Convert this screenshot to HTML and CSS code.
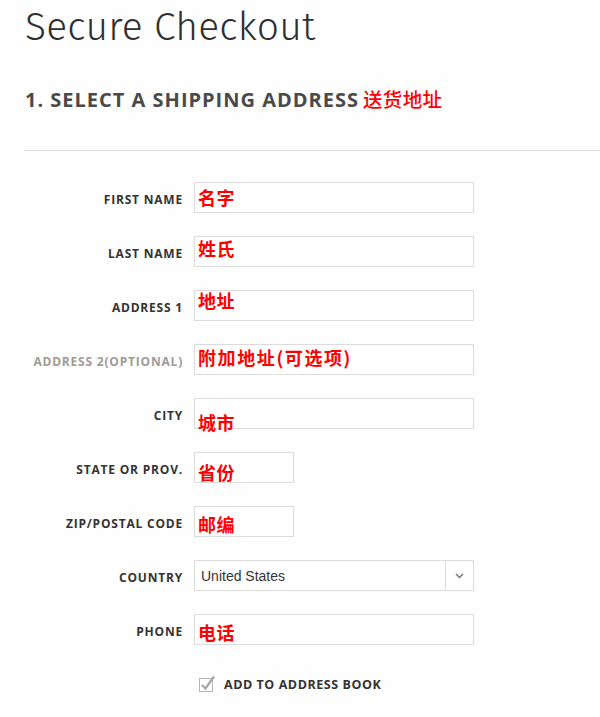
FILE: index.html
```html
<!DOCTYPE html>
<html>
<head>
<meta charset="utf-8">
<link rel="stylesheet" href="styles.css">
</head>
<body>
<div class="page">
  <h1 class="title">Secure Checkout</h1>
  <h2 class="step">1. SELECT A SHIPPING ADDRESS<span class="cn-head">送货地址</span></h2>
  <hr class="rule">
  <form class="form">
    <label class="lbl">FIRST NAME</label>
    <div class="box"><span class="cn off6">名字</span></div>

    <label class="lbl">LAST NAME</label>
    <div class="box"><span class="cn off3">姓氏</span></div>

    <label class="lbl">ADDRESS 1</label>
    <div class="box"><span class="cn off0">地址</span></div>

    <label class="lbl optional">ADDRESS 2(OPTIONAL)</label>
    <div class="box"><span class="cn off4 wide">附加地址(可选项)</span></div>

    <label class="lbl">CITY</label>
    <div class="box"><span class="cn off15">城市</span></div>

    <label class="lbl">STATE OR PROV.</label>
    <div class="box short"><span class="cn off11">省份</span></div>

    <label class="lbl">ZIP/POSTAL CODE</label>
    <div class="box short"><span class="cn off9">邮编</span></div>

    <label class="lbl">COUNTRY</label>
    <div class="box select">
      <span class="sel-value">United States</span>
      <span class="sel-arrow">
        <svg width="9" height="6" viewBox="0 0 9 6"><path d="M1 1 L4.5 4.5 L8 1" fill="none" stroke="#777" stroke-width="1.5"/></svg>
      </span>
    </div>

    <label class="lbl">PHONE</label>
    <div class="box"><span class="cn off9">电话</span></div>

    <div class="check-row">
      <span class="checkbox">
        <svg width="18" height="19" viewBox="0 0 18 19">
          <rect x="0.5" y="3.5" width="13" height="13" fill="#fff" stroke="#b5b5b5"/>
          <path d="M3 10 L6.5 13.5 L15 1.5" fill="none" stroke="#a8a8a8" stroke-width="2.4"/>
        </svg>
      </span>
      <span class="check-label">ADD TO ADDRESS BOOK</span>
    </div>
  </form>
</div>
</body>
</html>
```

FILE: styles.css
```css
html, body {
  margin: 0;
  padding: 0;
  background: #fefefe;
}

.page {
  padding-left: 24px;
  font-family: "Open Sans", "Liberation Sans", sans-serif;
  color: #333;
}

.title {
  margin: 0;
  padding-top: 2px;
  padding-left: 1px;
  font-family: "Fira Sans", "Open Sans", sans-serif;
  font-weight: 300;
  font-size: 39px;
  line-height: 50px;
  letter-spacing: 0.2px;
  color: #2f2f2f;
}

.step {
  margin: 34px 0 0 1px;
  font-size: 20px;
  line-height: 26px;
  font-weight: 700;
  letter-spacing: 1px;
  color: #4a4a4a;
  white-space: nowrap;
}

.cn-head {
  font-family: "Noto Sans CJK SC", sans-serif;
  font-weight: 500;
  color: #ff0000;
  font-size: 19.5px;
  letter-spacing: 0.3px;
  margin-left: 4px;
}

.rule {
  margin: 37px 0 0 0;
  border: 0;
  border-top: 1px solid #dedede;
  height: 0;
}

.form {
  display: grid;
  grid-template-columns: 159px 280px;
  column-gap: 11px;
  row-gap: 23px;
  grid-auto-rows: 31px;
  margin-top: 31px;
}

.lbl {
  text-align: right;
  font-size: 12px;
  font-weight: 700;
  letter-spacing: 0.8px;
  line-height: 14px;
  padding-top: 11px;
  color: #333;
  white-space: nowrap;
}

.lbl.optional {
  color: #a09a98;
}

.box {
  box-sizing: border-box;
  border: 1px solid #dcdcdc;
  background: #fff;
  height: 31px;
}

.box.short {
  width: 100px;
}

.cn {
  display: block;
  padding-left: 3px;
  font-family: "Noto Sans CJK SC", sans-serif;
  font-weight: 700;
  font-size: 18px;
  line-height: 18px;
  color: #ff0000;
  letter-spacing: 0.5px;
  white-space: nowrap;
}

.cn.wide {
  letter-spacing: 1.6px;
}

.off0 { padding-top: 0; }
.off3 { padding-top: 2px; }
.off4 { padding-top: 3px; }
.off6 { padding-top: 5px; }
.off9 { padding-top: 8px; }
.off11 { padding-top: 10px; }
.off15 { padding-top: 14px; }

.select {
  display: flex;
  align-items: center;
}

.sel-value {
  flex: 1;
  padding-left: 6px;
  font-family: "Liberation Sans", Arial, sans-serif;
  font-size: 14px;
  color: #333;
}

.sel-arrow {
  width: 27px;
  height: 100%;
  border-left: 1px solid #dcdcdc;
  display: flex;
  align-items: center;
  justify-content: center;
}

.check-row {
  grid-column: 2;
  display: flex;
  align-items: center;
  padding-left: 5px;
  margin-top: 2px;
}

.checkbox {
  display: block;
  width: 18px;
  height: 19px;
}

.check-label {
  margin-left: 7px;
  font-size: 12.5px;
  font-weight: 700;
  letter-spacing: 0.55px;
  color: #333;
  white-space: nowrap;
}
```
